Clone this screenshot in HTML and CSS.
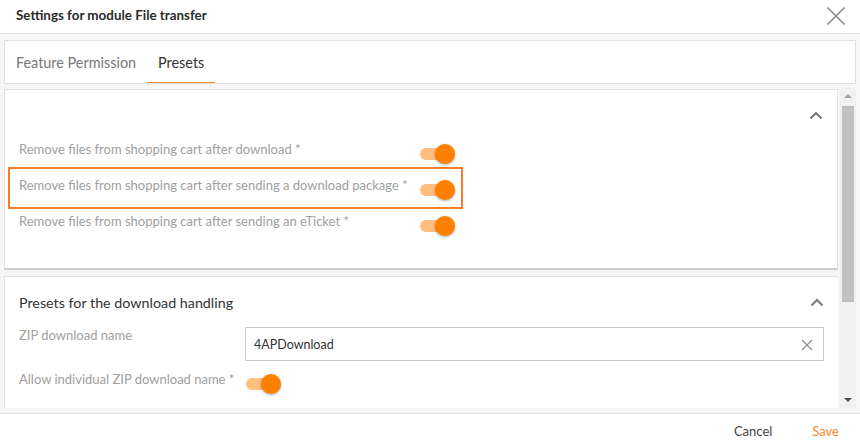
FILE: index.html
```html
<!DOCTYPE html>
<html>
<head>
<meta charset="utf-8">
<link rel="stylesheet" href="styles.css">
</head>
<body>
<div class="dialog">
  <header class="dlg-head">
    <h1 class="dlg-title">Settings for module File transfer</h1>
    <button class="close" aria-label="Close">
      <svg width="20" height="20" viewBox="0 0 20 20"><path d="M1.5 1.5L18.5 18.5M18.5 1.5L1.5 18.5" stroke="#8a8a8a" stroke-width="1.6" fill="none"/></svg>
    </button>
  </header>
  <div class="dlg-body">
    <nav class="tabs">
      <span class="tab">Feature Permission</span>
      <span class="tab active">Presets</span>
    </nav>
    <div class="scroller">
      <div class="scroll-content">
        <section class="card card-one">
          <div class="card-head">
            <span class="card-title"></span>
            <svg class="chev" width="14" height="9" viewBox="0 0 14 9"><path d="M1.5 7.5L7 2L12.5 7.5" stroke="#7a7a7a" stroke-width="2" fill="none"/></svg>
          </div>
          <div class="rows">
            <div class="row">
              <span class="lbl">Remove files from shopping cart after download *</span>
              <span class="toggle"><span class="knob"></span></span>
            </div>
            <div class="row highlight">
              <span class="lbl">Remove files from shopping cart after sending a download package *</span>
              <span class="toggle"><span class="knob"></span></span>
            </div>
            <div class="row">
              <span class="lbl">Remove files from shopping cart after sending an eTicket *</span>
              <span class="toggle"><span class="knob"></span></span>
            </div>
          </div>
        </section>
        <section class="card card-two">
          <div class="card-head">
            <span class="card-title">Presets for the download handling</span>
            <svg class="chev" width="14" height="9" viewBox="0 0 14 9"><path d="M1.5 7.5L7 2L12.5 7.5" stroke="#7a7a7a" stroke-width="2" fill="none"/></svg>
          </div>
          <div class="field">
            <span class="flbl">ZIP download name</span>
            <div class="input">
              <span class="ival">4APDownload</span>
              <svg width="12" height="12" viewBox="0 0 12 12"><path d="M1 1L11 11M11 1L1 11" stroke="#8a8a8a" stroke-width="1.2" fill="none"/></svg>
            </div>
          </div>
          <div class="field field-toggle">
            <span class="flbl">Allow individual ZIP download name *</span>
            <span class="toggle"><span class="knob"></span></span>
          </div>
        </section>
      </div>
      <div class="sbar">
        <span class="sb-up"></span>
        <div class="sb-track"><div class="sb-thumb"></div></div>
        <span class="sb-down"></span>
      </div>
    </div>
  </div>
  <footer class="dlg-foot">
    <button class="btn">Cancel</button>
    <button class="btn save">Save</button>
  </footer>
</div>
</body>
</html>
```

FILE: styles.css
```css
* { box-sizing: border-box; }
html, body { margin: 0; padding: 0; }
body {
  width: 860px;
  height: 443px;
  overflow: hidden;
  background: #fff;
  font-family: Lato, "Open Sans", sans-serif;
  color: #333;
}
.dialog {
  display: flex;
  flex-direction: column;
  height: 443px;
}
.dlg-head {
  height: 34px;
  display: flex;
  align-items: center;
  justify-content: space-between;
  padding: 0 14px 0 16px;
  border-bottom: 1px solid #e2e2e2;
}
.dlg-title {
  margin: 0;
  font-size: 13.4px;
  font-weight: 700;
  color: #2b2b2b;
  padding-bottom: 3px;
}
.close {
  border: 0;
  background: none;
  padding: 0;
  width: 20px;
  height: 20px;
  margin-bottom: 2px;
}
.close svg { display: block; }
.dlg-body {
  background: #f6f6f6;
  padding: 6px 4px 5px 4px;
  display: flex;
  flex-direction: column;
  gap: 4px;
  height: 379px;
}
.tabs {
  height: 44px;
  background: #fff;
  border: 1px solid #e0e0e0;
  display: flex;
  align-items: stretch;
}
.tab {
  display: flex;
  align-items: center;
  padding: 0 11px;
  font-size: 14.4px;
  color: #777;
  margin-top: 1px;
}
.tab.active {
  color: #333;
  border-bottom: 1px solid #f08a24;
}
.scroller {
  flex: 1;
  display: flex;
  gap: 2px;
  min-height: 0;
}
.scroll-content {
  flex: 1;
  display: flex;
  flex-direction: column;
  gap: 8px;
  overflow: hidden;
  padding-top: 1px;
}
.card {
  background: #fff;
  border-left: 1px solid #e2e2e2;
  border-top: 1px solid #e2e2e2;
}
.card-one {
  height: 179px;
  flex: none;
  box-shadow: 0 2px 1px 0 #cfcfcf;
  border-right: 1px solid #e2e2e2;
  padding: 0 0 0 6px;
}
.card-head {
  display: flex;
  justify-content: space-between;
  align-items: center;
  padding-right: 14px;
}
.card-one .card-head {
  height: 44px;
  align-items: flex-start;
  padding-top: 21px;
}
.chev { display: block; }
.card-title {
  font-size: 14.3px;
  color: #333;
}
.rows {
  display: flex;
  flex-direction: column;
}
.row {
  display: flex;
  align-items: flex-start;
  height: 36px;
  padding-top: 7px;
  padding-left: 8px;
  width: 449px;
}
.row.highlight {
  outline: 2px solid #f47d25;
  outline-offset: 1px;
}
.lbl {
  width: 401px;
  font-size: 13px;
  color: #a0a0a0;
  flex: none;
}
.toggle {
  position: relative;
  width: 34px;
  height: 12px;
  border-radius: 6px;
  background: #ffc07f;
  margin-top: 7px;
  flex: none;
}
.knob {
  position: absolute;
  right: -1px;
  top: -4px;
  width: 20px;
  height: 20px;
  border-radius: 50%;
  background: #ff8000;
  box-shadow: 0 1px 3px rgba(0,0,0,0.35);
}
.card-two {
  flex: 1;
  padding: 0 14px;
}
.card-two .card-head {
  height: 50px;
  padding-right: 0;
}
.field {
  display: flex;
  align-items: flex-start;
}
.flbl {
  width: 226px;
  font-size: 13px;
  color: #a0a0a0;
  flex: none;
}
.input {
  flex: 1;
  height: 34px;
  border: 1px solid #cccccc;
  display: flex;
  align-items: center;
  justify-content: space-between;
  padding: 1px 10px 0 8px;
  font-size: 12.5px;
  color: #333;
}
.input svg { display: block; }
.field-toggle {
  margin-top: 10px;
}
.field-toggle .toggle {
  margin-top: 7px;
  margin-left: 1px;
}
.sbar {
  width: 16px;
  flex: none;
  background: #f1f1f1;
  display: flex;
  flex-direction: column;
  align-items: center;
}
.sb-up, .sb-down {
  width: 0;
  height: 0;
  border-left: 4px solid transparent;
  border-right: 4px solid transparent;
  margin: 6px 0 8px;
}
.sb-up { border-bottom: 4px solid #a3a3a3; }
.sb-down { border-top: 4px solid #505050; margin: 6px 0; }
.sb-track {
  flex: 1;
  width: 100%;
  display: flex;
  flex-direction: column;
}
.sb-thumb {
  height: 196px;
  margin: 0 2px;
  background: #c1c1c1;
}
.dlg-foot {
  flex: 1;
  border-top: 1px solid #e2e2e2;
  display: flex;
  justify-content: flex-end;
  align-items: center;
  padding-right: 21px;
  padding-top: 4px;
}
.btn {
  border: 0;
  background: none;
  font-family: inherit;
  font-size: 13px;
  color: #444;
  padding: 0;
}
.btn.save {
  color: #f7891f;
  margin-left: 40px;
}
```
